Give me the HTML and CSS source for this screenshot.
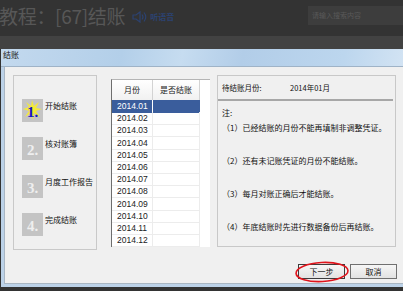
FILE: index.html
```html
<!DOCTYPE html>
<html>
<head>
<meta charset="utf-8">
<link rel="stylesheet" href="styles.css">
</head>
<body>
<div class="top">
  <div class="title">教程：[67]结账</div>
  <svg class="speaker" width="16" height="14" viewBox="0 0 16 14">
    <path d="M2 5h3l4-3v10l-4-3H2z" fill="none" stroke="#2c4270" stroke-width="1.2"/>
    <path d="M11 4.5q2 2.5 0 5" fill="none" stroke="#2c4270" stroke-width="1.2"/>
    <path d="M13 2.5q3.5 4.5 0 9" fill="none" stroke="#2c4270" stroke-width="1.2"/>
  </svg>
  <span class="listen">听语音</span>
  <div class="search">请输入搜索内容</div>
</div>
<div class="band"></div>
<div class="window">
  <div class="titlebar">结账</div>
  <div class="wbody">
    <div class="content">
      <div class="steps">
        <div class="step">
          <div class="icon first">
            <svg class="burst" width="21" height="23" viewBox="0 0 21 23">
              <polygon points="10,1 12,7 17,3 14,9 20,10 14,12 18,18 12,14 11,21 9,14 3,18 7,12 1,10 7,8 4,3 9,7" fill="#f4ea3a"/>
            </svg>
            <span class="num blue">1.</span>
          </div>
          <span class="label">开始结账</span>
        </div>
        <div class="step">
          <div class="icon"><span class="num">2.</span></div>
          <span class="label">核对账簿</span>
        </div>
        <div class="step">
          <div class="icon"><span class="num">3.</span></div>
          <span class="label">月度工作报告</span>
        </div>
        <div class="step">
          <div class="icon"><span class="num">4.</span></div>
          <span class="label">完成结账</span>
        </div>
      </div>
      <div class="table">
        <div class="thead">
          <div class="th">月份</div>
          <div class="th">是否结账</div>
        </div>
        <div class="row sel"><div class="td">2014.01</div><div class="td"></div></div>
        <div class="row"><div class="td">2014.02</div><div class="td"></div></div>
        <div class="row"><div class="td">2014.03</div><div class="td"></div></div>
        <div class="row"><div class="td">2014.04</div><div class="td"></div></div>
        <div class="row"><div class="td">2014.05</div><div class="td"></div></div>
        <div class="row"><div class="td">2014.06</div><div class="td"></div></div>
        <div class="row"><div class="td">2014.07</div><div class="td"></div></div>
        <div class="row"><div class="td">2014.08</div><div class="td"></div></div>
        <div class="row"><div class="td">2014.09</div><div class="td"></div></div>
        <div class="row"><div class="td">2014.10</div><div class="td"></div></div>
        <div class="row"><div class="td">2014.11</div><div class="td"></div></div>
        <div class="row"><div class="td">2014.12</div><div class="td"></div></div>
      </div>
      <div class="notes">
        <div class="nhead"><span class="nlabel">待结账月份:</span><span>2014年01月</span></div>
        <div class="nbody">
          <div class="nt">注:</div>
          <div class="n1">（1）已经结账的月份不能再填制非调整凭证。</div>
          <div class="nn">（2）还有未记账凭证的月份不能结账。</div>
          <div class="nn">（3）每月对账正确后才能结账。</div>
          <div class="nn">（4）年底结账时先进行数据备份后再结账。</div>
        </div>
      </div>
    </div>
    <div class="buttons">
      <div class="btn next">下一步
        <svg class="ring" width="56" height="24" viewBox="0 0 56 24">
          <ellipse cx="28" cy="12" rx="26" ry="9.5" transform="rotate(-3 28 12)" fill="none" stroke="#e0141c" stroke-width="1.6"/>
        </svg>
      </div>
      <div class="btn">取消</div>
    </div>
  </div>
</div>
</body>
</html>
```
FILE: styles.css
```css
* { box-sizing: border-box; }
html, body { margin: 0; padding: 0; }
body {
  width: 403px;
  height: 291px;
  overflow: hidden;
  background: #333333;
  font-family: "Noto Sans CJK SC", "Liberation Sans", sans-serif;
}
.top {
  height: 36px;
  background: #333333;
  display: flex;
  align-items: flex-start;
  position: relative;
}
.title {
  color: #575757;
  font-size: 19px;
  line-height: 20px;
  margin-top: 6px;
  margin-left: -1px;
  white-space: nowrap;
  letter-spacing: -0.3px;
}
.speaker { margin: 10px 0 0 6px; }
.listen {
  color: #2c4270;
  font-size: 8px;
  font-weight: bold;
  margin: 11px 0 0 3px;
}
.search {
  margin-left: auto;
  width: 95px;
  height: 19px;
  margin-top: 6px;
  background: #3d3d3d;
  color: #595959;
  font-size: 7px;
  line-height: 19px;
  padding-left: 4px;
}
.band { height: 13px; background: #424242; }
.window {
  height: 238px;
  margin-left: 1px;
  background: #bcd2e8;
  display: flex;
  flex-direction: column;
}
.titlebar {
  height: 18px;
  background: linear-gradient(100deg, #c3d9ee 0%, #b3cfe9 30%, #c6dcf0 45%, #b2cde8 60%, #bcd6ee 85%, #d2e3f3 100%);
  border-bottom: 1px solid #9fb3c7;
  font-size: 8px;
  line-height: 10px;
  padding: 1px 0 0 2px;
  color: #1a1a1a;
}
.wbody {
  flex: 1;
  margin: 0 0 3px 3px;
  background: #f0f0f0;
  border-left: 1px solid #a9b6c3;
  border-bottom: 1px solid #a9b6c3;
  padding: 8px 6px 0 8px;
  display: flex;
  flex-direction: column;
}
.content { display: flex; align-items: flex-start; }
.steps {
  width: 84px;
  height: 175px;
  border: 1px solid #c9c9c9;
  padding: 23px 0 0 8px;
  display: flex;
  flex-direction: column;
  gap: 15px;
}
.step { display: flex; align-items: flex-start; height: 23px; }
.icon {
  width: 21px;
  height: 23px;
  background: #c4c4c4;
  position: relative;
  display: flex;
  align-items: center;
  justify-content: center;
}
.burst { position: absolute; left: 0; top: 0; }
.num {
  position: relative;
  font-family: "Liberation Serif", serif;
  font-weight: bold;
  font-size: 15px;
  color: #efefef;
  margin-top: 4px;
}
.num.blue { color: #1616c8; margin-top: 3px; }
.label {
  font-size: 8px;
  line-height: 10px;
  margin: 2px 0 0 2px;
  white-space: nowrap;
  color: #111;
}
.table {
  margin: 4px 0 0 14px;
  width: 99px;
  height: 168px;
  background: #ffffff;
  border-left: 1px solid #6e6e6e;
  border-top: 1px solid #b5b5b5;
}
.thead, .row { display: grid; grid-template-columns: 41px 47px; }
.thead { height: 20px; }
.th {
  font-size: 8px;
  line-height: 20px;
  text-align: center;
  background: linear-gradient(#ffffff, #f1f1f1);
  border-right: 1px solid #d3d3d3;
  border-bottom: 1px solid #d9d9d9;
  color: #222;
}
.row { height: 12.2px; }
.td {
  font-family: "Liberation Sans", sans-serif;
  font-size: 8.5px;
  line-height: 12px;
  padding-left: 5px;
  border-right: 1px solid #ececec;
  border-bottom: 1px solid #ececec;
  color: #222;
}
.row.sel .td { background: #3a5d9c; color: #ffffff; border-color: #3a5d9c; }
.row.sel .td:first-child { border-right-color: #ffffff; }
.notes {
  margin-left: 7px;
  width: 179px;
  height: 172px;
  border: 1px solid #c8c8c8;
}
.nhead {
  height: 25px;
  font-size: 7.5px;
  line-height: 24px;
  padding-left: 4px;
  border-bottom: 2px solid #a7a7a7;
  margin: 0 2px 0 0;
  display: flex;
  color: #111;
}
.nlabel { width: 68px; }
.nbody {
  font-size: 8px;
  line-height: 10px;
  padding: 7px 0 0 4px;
  color: #111;
  white-space: nowrap;
}
.nt { margin-bottom: 5px; }
.nn { margin-top: 23px; }
.buttons {
  display: flex;
  justify-content: flex-end;
  gap: 5px;
  margin-top: 14px;
}
.btn {
  width: 47px;
  height: 15px;
  font-size: 8px;
  line-height: 13px;
  text-align: center;
  background: linear-gradient(#f6f6f6, #e2e2e2);
  border: 1px solid #707070;
  color: #111;
  position: relative;
}
.btn.next { border-color: #3c3c3c; }
.ring { position: absolute; left: -5px; top: -5px; }
```
